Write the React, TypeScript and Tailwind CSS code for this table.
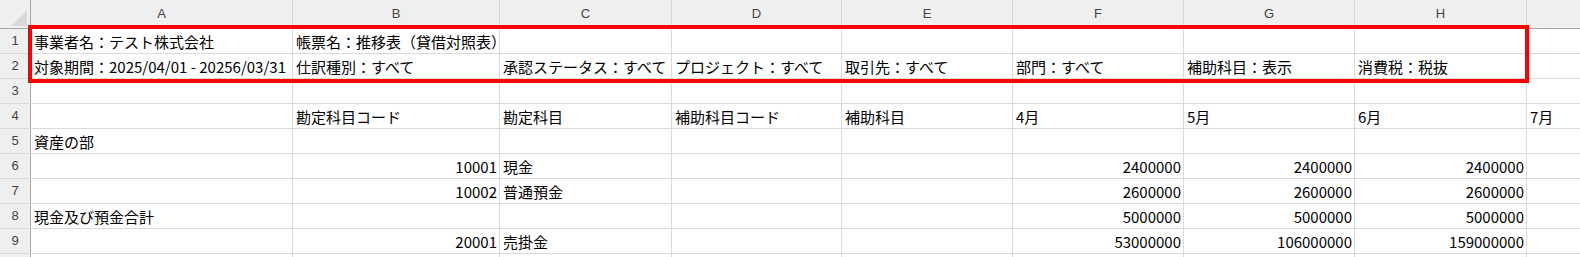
import React from "react";

type Cell = { t?: string; r?: boolean };

const widths = [262, 207, 172, 170, 171, 171, 171, 172, 200];
const cols = ["A", "B", "C", "D", "E", "F", "G", "H", "I"];

const rows: Cell[][] = [
  [{ t: "事業者名：テスト株式会社" }, { t: "帳票名：推移表（貸借対照表）" }],
  [
    { t: "対象期間：2025/04/01 - 20256/03/31" },
    { t: "仕訳種別：すべて" },
    { t: "承認ステータス：すべて" },
    { t: "プロジェクト：すべて" },
    { t: "取引先：すべて" },
    { t: "部門：すべて" },
    { t: "補助科目：表示" },
    { t: "消費税：税抜" },
  ],
  [],
  [
    {},
    { t: "勘定科目コード" },
    { t: "勘定科目" },
    { t: "補助科目コード" },
    { t: "補助科目" },
    { t: "4月" },
    { t: "5月" },
    { t: "6月" },
    { t: "7月" },
  ],
  [{ t: "資産の部" }],
  [
    {},
    { t: "10001", r: true },
    { t: "現金" },
    {},
    {},
    { t: "2400000", r: true },
    { t: "2400000", r: true },
    { t: "2400000", r: true },
  ],
  [
    {},
    { t: "10002", r: true },
    { t: "普通預金" },
    {},
    {},
    { t: "2600000", r: true },
    { t: "2600000", r: true },
    { t: "2600000", r: true },
  ],
  [
    { t: "現金及び預金合計" },
    {},
    {},
    {},
    {},
    { t: "5000000", r: true },
    { t: "5000000", r: true },
    { t: "5000000", r: true },
  ],
  [
    {},
    { t: "20001", r: true },
    { t: "売掛金" },
    {},
    {},
    { t: "53000000", r: true },
    { t: "106000000", r: true },
    { t: "159000000", r: true },
  ],
  [],
];

export default function App() {
  return (
    <div className="relative w-[1580px] h-[257px] overflow-hidden bg-white font-['Noto_Sans_CJK_JP',sans-serif] text-[15px] text-black">
      {/* column header */}
      <div className="flex h-[29px] bg-[#efefef] border-b border-[#a6a6a6]">
        <div className="w-[31px] shrink-0 h-full border-r border-[#a6a6a6] flex items-end justify-end pr-[3px] pb-[2px]">
          <svg width="16" height="16" viewBox="0 0 16 16">
            <polygon points="16,0 16,16 0,16" fill="#d9d9d9" />
          </svg>
        </div>
        {cols.map((c, i) => (
          <div
            key={c}
            style={{ width: widths[i] }}
            className="shrink-0 h-full border-r border-[#d9d9d9] flex items-center justify-center font-['Liberation_Sans',sans-serif] text-[13px] text-[#444]"
          >
            {i < 8 ? c : ""}
          </div>
        ))}
      </div>
      {rows.map((row, ri) => (
        <div key={ri} className="flex h-[25px] border-b border-[#dadada]">
          <div className="w-[31px] shrink-0 h-full bg-[#efefef] border-r border-[#a6a6a6] flex items-center justify-center font-['Liberation_Sans',sans-serif] text-[13px] text-[#444]">
            {ri < 9 ? ri + 1 : ""}
          </div>
          {widths.map((w, ci) => {
            const cell = row[ci] || {};
            return (
              <div
                key={ci}
                style={{ width: w }}
                className={`shrink-0 h-full border-r border-[#dadada] flex items-center whitespace-nowrap overflow-visible ${
                  cell.r ? "justify-end pr-[2px]" : "justify-start pl-[3px]"
                }`}
              >
                <span className="relative z-10 leading-none pt-[1px]">{cell.t ?? ""}</span>
              </div>
            );
          })}
        </div>
      ))}
      {/* red highlight box */}
      <div className="absolute left-[28px] top-[25px] w-[1501px] h-[58px] border-4 border-[#ff0000] pointer-events-none" />
    </div>
  );
}
